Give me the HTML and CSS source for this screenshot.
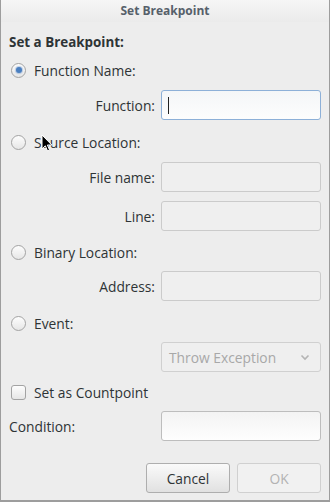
FILE: index.html
```html
<!DOCTYPE html>
<html lang="en">
<head>
    <meta charset="UTF-8">
    <meta name="viewport" content="width=device-width, initial-scale=1.0">
    <title>Set Breakpoint</title>
    <link rel="stylesheet" href="styles.css">
</head>
<body>
    <div class="window">
        <div class="titlebar">Set Breakpoint</div>
        <div class="content">
            <div class="heading">Set a Breakpoint:</div>

            <label class="option first">
                <span class="radio checked"></span>
                <span>Function Name:</span>
            </label>
            <div class="field">
                <span class="label">Function:</span>
                <div class="input focused"><span class="caret"></span></div>
            </div>

            <label class="option">
                <span class="radio"></span>
                <span>Source Location:</span>
            </label>
            <div class="field">
                <span class="label">File name:</span>
                <div class="input disabled"></div>
            </div>
            <div class="field tight">
                <span class="label">Line:</span>
                <div class="input disabled"></div>
            </div>

            <label class="option close">
                <span class="radio"></span>
                <span>Binary Location:</span>
            </label>
            <div class="field tight">
                <span class="label">Address:</span>
                <div class="input disabled"></div>
            </div>

            <label class="option">
                <span class="radio"></span>
                <span>Event:</span>
            </label>
            <div class="field tight">
                <span class="label"></span>
                <div class="input select">
                    <span>Throw Exception</span>
                    <svg width="10" height="7" viewBox="0 0 10 7"><path d="M1.5 1.5 L5 5 L8.5 1.5" fill="none" stroke="#b4b4b4" stroke-width="1.6"/></svg>
                </div>
            </div>

            <label class="option closer">
                <span class="checkbox"></span>
                <span>Set as Countpoint</span>
            </label>
            <div class="field tight left">
                <span class="label">Condition:</span>
                <div class="input plain"></div>
            </div>

            <div class="buttons">
                <button class="btn">Cancel</button>
                <button class="btn" disabled>OK</button>
            </div>
        </div>

        <svg class="pointer" width="12" height="19" viewBox="0 0 12 19">
            <path d="M1 1 L1 15 L4.3 11.8 L6.6 17 L8.6 16.1 L6.4 11 L10.8 11 Z" fill="#000" stroke="#fff" stroke-width="1"/>
        </svg>
    </div>
</body>
</html>
```

FILE: styles.css
```css
* {
    box-sizing: border-box;
}

body {
    margin: 0;
    padding: 0;
    font-family: 'Open Sans', 'DejaVu Sans', sans-serif;
    font-size: 13.8px;
    color: #2e3436;
    background: #ededed;
}

.window {
    position: relative;
    width: 330px;
    height: 502px;
    background: #ededed;
    border: 1px solid #9d9d9d;
    border-top: none;
    border-bottom-width: 2px;
}

.titlebar {
    height: 22px;
    line-height: 22px;
    text-align: center;
    font-size: 12px;
    font-weight: bold;
    color: #56606a;
    background: linear-gradient(#f6f6f6, #ebebeb);
}

.content {
    padding: 0 8px 0 8px;
    display: flex;
    flex-direction: column;
}

.heading {
    margin-top: 11px;
    height: 18px;
    line-height: 18px;
    font-size: 13.4px;
    font-weight: bold;
}

.option {
    display: flex;
    align-items: center;
    gap: 8px;
    height: 20px;
    margin-top: 12px;
    padding-left: 2px;
}

.option.first {
    margin-top: 9px;
}

.option.close {
    margin-top: 11px;
}

.option.closer {
    margin-top: 10px;
}

.radio {
    width: 15px;
    height: 15px;
    border-radius: 50%;
    border: 1px solid #a3a3a3;
    background: linear-gradient(#fdfdfd, #e6e6e6);
    display: flex;
    align-items: center;
    justify-content: center;
}

.radio.checked::after {
    content: "";
    width: 6px;
    height: 6px;
    border-radius: 50%;
    background: #4a7fc0;
    box-shadow: 0 0 1px 1px rgba(74, 127, 192, 0.35);
}

.checkbox {
    width: 15px;
    height: 15px;
    border-radius: 3px;
    border: 1px solid #a3a3a3;
    background: linear-gradient(#fdfdfd, #e6e6e6);
}

.field {
    display: flex;
    align-items: center;
    justify-content: flex-end;
    gap: 6px;
    margin-top: 10px;
}

.field.tight {
    margin-top: 9px;
}

.field.left {
    justify-content: space-between;
}

.label {
    flex: 1;
    text-align: right;
}

.field.left .label {
    text-align: left;
}

.input {
    width: 160px;
    height: 30px;
    border: 1px solid #c3c3c3;
    border-radius: 3px;
    background: linear-gradient(#f1f1f1, #fbfbfb);
    display: flex;
    align-items: center;
}

.input.focused {
    border-color: #8db0d8;
    background: linear-gradient(#f4f6f8, #fdfdfd);
}

.caret {
    width: 1px;
    height: 17px;
    margin-left: 6px;
    background: #222;
}

.input.disabled {
    background: #efefef;
    border-color: #cbcbcb;
}

.input.plain {
    border-color: #bdbdbd;
    background: linear-gradient(#f3f3f3, #fefefe);
}

.input.select {
    justify-content: space-between;
    padding: 0 10px 0 7px;
    background: #efefef;
    border-color: #d0d0d0;
    color: #a8a8a8;
}

.buttons {
    display: flex;
    justify-content: flex-end;
    gap: 7px;
    margin-top: 22px;
}

.btn {
    width: 84px;
    height: 30px;
    font-family: inherit;
    font-size: 13.8px;
    color: #2e3436;
    border: 1px solid #aeaeae;
    border-radius: 3px;
    background: linear-gradient(#fafafa, #e1e1e1);
}

.btn:disabled {
    color: #b3b3b3;
    border-color: #d0d0d0;
    background: #f1f1f1;
}

.pointer {
    position: absolute;
    left: 40px;
    top: 134px;
}
```
